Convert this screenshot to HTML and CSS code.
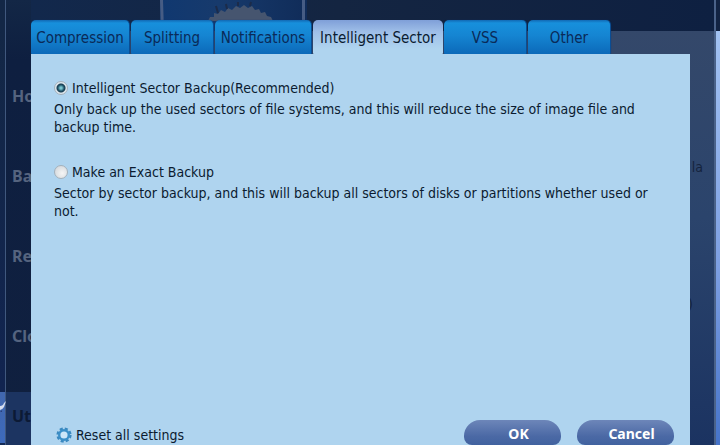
FILE: index.html
```
<!DOCTYPE html>
<html lang="en">
<head>
<meta charset="utf-8">
<title>Backup options</title>
<link rel="stylesheet" href="styles.css">
</head>
<body>
<div class="app">
  <div class="edge edge-left">
    <svg class="bird" width="6" height="16" viewBox="0 0 6 16" aria-hidden="true"><path d="M0 8Q3 8 4 5L6 3L4 9Q2 12 0 12Z" fill="#d5def0"/><path d="M0 14L2 12L2 14Z" fill="#28407c"/></svg>
  </div>
  <nav class="sidebar">
    <span class="side-item">Ho</span>
    <span class="side-item">Ba</span>
    <span class="side-item">Re</span>
    <span class="side-item">Clo</span>
    <span class="side-item current">Ut</span>
  </nav>
  <div class="workspace">
    <div class="topbar">
      <svg class="banner" width="147" height="31" viewBox="0 0 147 31" aria-hidden="true">
        <defs>
          <linearGradient id="sky" x2="1" y2="0"><stop offset="0" stop-color="#103870"/><stop offset=".4" stop-color="#173a6c"/><stop offset="1" stop-color="#102c59"/></linearGradient>
        </defs>
        <rect width="147" height="31" fill="url(#sky)"/>
        <path d="M48 21L50 17L54 17L54 13L58 14L61 10L65 12L68 8L72 10L76 6L80 8L84 5L88 8L92 6L95 10L99 9L101 13L105 12L107 16L111 17L113 21Z" fill="#46556f"/>
        <path d="M56 6L58 13M66 4L67 9M78 2L78 6M91 2L90 6" stroke="#1c2b49" stroke-width="2"/>
        <path d="M0 0H3L4 31H1ZM142 0H145V31H142Z" fill="#465c84"/>
      </svg>
    </div>
    <div class="page"><span class="page-text">la</span><span class="page-text">)</span></div>
  </div>
  <div class="edge edge-right"></div>
</div>

<main class="dialog">
  <div class="tabs" role="tablist">
    <button class="tab" role="tab">Compression</button>
    <button class="tab" role="tab">Splitting</button>
    <button class="tab" role="tab">Notifications</button>
    <button class="tab selected" role="tab" aria-selected="true">Intelligent Sector</button>
    <button class="tab" role="tab">VSS</button>
    <button class="tab" role="tab">Other</button>
  </div>
  <form class="panel">
    <div class="option">
      <div class="choice"><input type="radio" name="mode" id="smart" checked><label for="smart">Intelligent Sector Backup(Recommended)</label></div>
      <p>Only back up the used sectors of file systems, and this will reduce the size of image file and backup time.</p>
    </div>
    <div class="option">
      <div class="choice"><input type="radio" name="mode" id="exact"><label for="exact">Make an Exact Backup</label></div>
      <p>Sector by sector backup, and this will backup all sectors of disks or partitions whether used or not.</p>
    </div>
    <div class="footer">
      <button type="reset" class="reset">
        <svg width="16" height="16" viewBox="0 0 16 16" aria-hidden="true"><circle cx="8" cy="8" r="6.4" fill="none" stroke="#3a88bf" stroke-width="2.4" stroke-dasharray="3 2.03"/><circle cx="8" cy="8" r="4.8" fill="#cde6f8" stroke="#3b8fc8" stroke-width="2.4"/></svg>
        Reset all settings
      </button>
      <button type="button" class="pill">OK</button>
      <button type="button" class="pill">Cancel</button>
    </div>
  </form>
</main>
</body>
</html>
```
FILE: styles.css
```
* {
  box-sizing: border-box;
}

body {
  margin: 0;
  min-height: 100vh;
  display: flex;
  overflow: hidden;
  background: #10203f;
  color: #0b1b30;
  font: 14px/18px "DejaVu Sans Condensed", "Noto Sans", sans-serif;
}

button {
  margin: 0;
  border: 0;
  padding: 0;
  color: inherit;
  font: inherit;
}

/* Dimmed application window behind the dialog */
.app {
  position: absolute;
  inset: 0;
  z-index: -1;
  display: flex;
  overflow: hidden;
}

.edge-left {
  width: 6px;
  padding-top: 392px;
  border-right: 1px solid #40587e;
  background: linear-gradient(#132746 0 30px, #112450 392px, #4167ae 392px, #3d6abb 443px, #142b56 443px);
}

.bird {
  display: block;
  margin-top: 6px;
}

.sidebar {
  width: 25px;
  padding-top: 72px;
  background: linear-gradient(#132746, #0e1f40 60px, #10203f);
}

.side-item {
  display: block;
  height: 80px;
  padding: 14px 6px;
  color: #55647f;
  font: bold 16px/20px "Noto Sans", sans-serif;
}

.side-item.current {
  height: 53px;
  background: #1c3461;
  color: #0c1a35;
}

.workspace {
  flex: 1;
  display: flex;
  flex-direction: column;
}

.topbar {
  height: 31px;
  padding-left: 129px;
  background: linear-gradient(90deg, #12284c, #142541 45%, #0e2041);
}

.banner {
  display: block;
}

.page {
  flex: 1;
  display: flex;
  flex-direction: column;
  align-items: flex-end;
  gap: 119px;
  padding: 127px 11px 0;
  background: linear-gradient(#34486a, #2b446c 45%, #1b3361);
  color: #14233d;
}

.page-text:last-child {
  margin-right: 10px;
}

.edge-right {
  width: 6px;
  border-left: 2px solid #4a6289;
  background: linear-gradient(#122342 31px, #a2c2f2 31px, #7d9fe2 60%, #4573c9);
}

/* Options dialog */
.dialog {
  flex: 1;
  display: flex;
  flex-direction: column;
  margin: 20px 30px 0 31px;
}

.tabs {
  display: flex;
  gap: 1px;
}

.tab {
  width: 83px;
  height: 34px;
  padding-top: 2px;
  border-right: 1px solid #0a4d93;
  border-radius: 5px 5px 1px 1px;
  background: linear-gradient(#1269b4, #1790dc 3px, #1585d2 45%, #0c69b9);
  box-shadow: 0 0 1px #0a3a75;
  color: #0a2a58;
  font-size: 15px;
  white-space: nowrap;
}

.tab:nth-child(1) {
  width: 99px;
}

.tab:nth-child(3) {
  width: 97px;
}

.tab.selected {
  width: 130px;
  border: 0;
  background: linear-gradient(#7f9fd8, #9fbfe8 35%, #afd4ef 85%);
  box-shadow: none;
  color: #0b1b30;
}

.panel {
  flex: 1;
  display: flex;
  flex-direction: column;
  gap: 27px;
  padding: 25px 16px 0 23px;
  background: #afd4ef;
}

.choice {
  display: flex;
  align-items: center;
  gap: 4px;
  height: 18px;
}

.choice input {
  appearance: none;
  width: 14px;
  height: 14px;
  margin: 0;
  border: 1px solid #a5b1bb;
  border-radius: 50%;
  background: radial-gradient(circle at 60% 60%, #f5f5f5, #cdd2d7);
}

.choice input:checked {
  background: radial-gradient(circle at 50% 50%, #79c5cf 0 1px, #22576d 3px, #183c50 4px, #dce6ed 5px);
}

.option p {
  margin: 3px 0 0;
  padding-right: 10px;
}

.footer {
  display: flex;
  gap: 16px;
  height: 25px;
  margin-top: auto;
  align-items: flex-start;
}

.reset {
  display: flex;
  align-items: center;
  gap: 4px;
  margin: 6px auto 0 2px;
  background: none;
}

.pill {
  width: 97px;
  height: 25px;
  padding-left: 12px;
  border-radius: 16px 16px 8px 8px;
  background: linear-gradient(#6d86b9, #4b69a5 65%, #41629f);
  color: #fff;
  font: bold 14px/28px "Noto Sans", sans-serif;
}
```
